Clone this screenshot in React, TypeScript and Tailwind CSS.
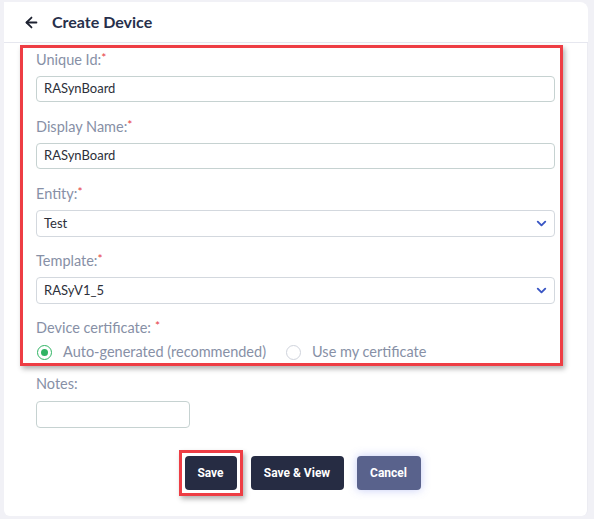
import { ArrowLeft, ChevronDown } from 'lucide-react'

const FONT = { fontFamily: 'Lato, "Open Sans", sans-serif' }

function Label({ text, spaced }: { text: string; spaced?: boolean }) {
  return (
    <div className="h-5 text-[14.5px] leading-5 text-[#8790a6]">
      {text}
      <span className={`align-top text-[12px] leading-4 text-[#e63c45] ${spaced ? 'ml-1' : ''}`}>*</span>
    </div>
  )
}

function TextInput({ value }: { value: string }) {
  return (
    <div className="mt-1.5 flex h-[26px] items-center rounded-[4px] border border-[#c6d2d1] px-[7px] text-[13px] text-[#2c2f3a]">
      {value}
    </div>
  )
}

function Select({ value }: { value: string }) {
  return (
    <div className="mt-1.5 flex h-[27px] items-center justify-between rounded-[4px] border border-[#d3d8de] pl-[7px] pr-[5px] text-[13px] text-[#2c2f3a]">
      <span>{value}</span>
      <ChevronDown size={15} strokeWidth={3} className="text-[#3a56c4]" />
    </div>
  )
}

export default function App() {
  return (
    <div className="min-h-[519px] w-[594px] bg-[#f1f1f6] pl-1 pr-[6px] pt-[2px] pb-[3px]" style={FONT}>
      <div className="flex h-[41px] items-center gap-3 rounded-tr-lg border-b border-[#e6e7ef] bg-white pl-[19px]">
        <ArrowLeft size={17} strokeWidth={2.5} className="text-[#1d2130]" />
        <span className="text-[16px] font-bold text-[#27304b]">Create Device</span>
      </div>

      <div className="h-[473px] rounded-b-md border-r border-[#ececf2] bg-white pl-4 pr-[24px] pt-[2px]">
        <div className="border-[3px] border-[#ee3d44] pl-[13px] pr-[5px] pt-[2px] pb-[1px] shadow-[2px_3px_5px_rgba(0,0,0,0.3)]">
          <Label text="Unique Id:" />
          <TextInput value="RASynBoard" />
          <div className="mt-[15px]">
            <Label text="Display Name:" />
            <TextInput value="RASynBoard" />
          </div>
          <div className="mt-[15px]">
            <Label text="Entity:" />
            <Select value="Test" />
          </div>
          <div className="mt-[14px]">
            <Label text="Template:" />
            <Select value="RASyV1_5" />
          </div>
          <div className="mt-[14px]">
            <Label text="Device certificate:" spaced />
            <div className="mt-1 flex h-5 items-center text-[14.5px] text-[#8790a6]">
              <span className="ml-[1px] flex h-[15px] w-[15px] items-center justify-center rounded-full border-[1.5px] border-[#2fb463]">
                <span className="h-[7px] w-[7px] rounded-full bg-[#2fb463]" />
              </span>
              <span className="ml-[11px]">Auto-generated (recommended)</span>
              <span className="ml-[20px] h-[15px] w-[15px] rounded-full border border-[#cfd3dc]" />
              <span className="ml-[11px]">Use my certificate</span>
            </div>
          </div>
        </div>

        <div className="mt-2 pl-4">
          <div className="h-5 text-[14.5px] leading-5 text-[#8790a6]">Notes:</div>
          <div className="mt-[7px] h-[27px] w-[154px] rounded-[4px] border border-[#c6d2d1]" />
        </div>

        <div className="mt-[22px] flex items-center justify-center pl-4 text-[12px] font-bold text-white" style={{ fontFamily: 'Roboto, sans-serif' }}>
          <div className="border-[3px] border-[#ee3d44] p-[3px] shadow-[2px_3px_5px_rgba(0,0,0,0.3)]">
            <button className="h-[34px] w-[52px] rounded-[4px] bg-[#262c43]">Save</button>
          </div>
          <button className="ml-2 h-[34px] w-[93px] rounded-[4px] bg-[#262c43]">Save &amp; View</button>
          <button className="ml-[13px] h-[34px] w-[64px] rounded-[4px] bg-[#59628c] shadow-[0_0_10px_rgba(90,110,230,0.35)]">Cancel</button>
        </div>
      </div>
    </div>
  )
}
